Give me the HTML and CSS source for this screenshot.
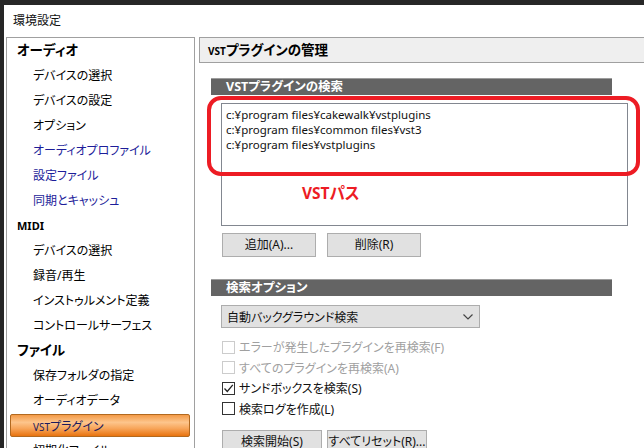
FILE: index.html
```html
<!DOCTYPE html>
<html>
<head>
	<meta charset="UTF-8">
	<title>環境設定</title>
	<link rel="stylesheet" href="styles.css">
</head>
<body>
<div id="topbar"></div>

<div id="window">
	<div id="title">環境設定</div>

	<div id="main">
		<div id="nav">
			<div class="navHead">オーディオ</div>
			<div class="navItem">デバイスの選択</div>
			<div class="navItem">デバイスの設定</div>
			<div class="navItem">オプション</div>
			<div class="navItem blue">オーディオプロファイル</div>
			<div class="navItem blue">設定ファイル</div>
			<div class="navItem blue">同期とキャッシュ</div>
			<div class="navHead small">MIDI</div>
			<div class="navItem">デバイスの選択</div>
			<div class="navItem">録音/再生</div>
			<div class="navItem">インストゥルメント定義</div>
			<div class="navItem">コントロールサーフェス</div>
			<div class="navHead">ファイル</div>
			<div class="navItem">保存フォルダの指定</div>
			<div class="navItem">オーディオデータ</div>
			<div class="navItem selected"><span class="sc">VST</span>プラグイン</div>
			<div class="navItem">初期化ファイル</div>
		</div>

		<div id="page">
			<div id="pageHead"><span class="scHead">VST</span>プラグインの管理</div>

			<div id="content">
				<div class="section">VSTプラグインの検索</div>

				<div id="pathBox">
					<div class="pathLine">c:¥program files¥cakewalk¥vstplugins</div>
					<div class="pathLine">c:¥program files¥common files¥vst3</div>
					<div class="pathLine">c:¥program files¥vstplugins</div>
				</div>

				<div class="btnRow">
					<div class="btn">追加(A)...</div>
					<div class="btn">削除(R)</div>
				</div>

				<div class="section second">検索オプション</div>

				<div id="combo">
					<span>自動バックグラウンド検索</span>
					<svg width="10" height="6" viewBox="0 0 10 6"><polyline points="0.5,0.5 5,5 9.5,0.5" fill="none" stroke="#444" stroke-width="1.2"/></svg>
				</div>

				<div id="checks">
					<div class="check disabled"><span class="box"></span>エラーが発生したプラグインを再検索(F)</div>
					<div class="check disabled"><span class="box"></span>すべてのプラグインを再検索(A)</div>
					<div class="check"><span class="box"><svg width="11" height="11" viewBox="0 0 11 11"><polyline points="1.5,5.5 4.3,8.5 9.8,1.8" fill="none" stroke="#222" stroke-width="1.3"/></svg></span>サンドボックスを検索(S)</div>
					<div class="check"><span class="box"></span>検索ログを作成(L)</div>
				</div>

				<div class="btnRow last">
					<div class="btn wide">検索開始(S)</div>
					<div class="btn wide">すべてリセット(R)...</div>
				</div>

				<div id="ring"></div>
				<div id="ringLabel">VSTパス</div>
			</div>
		</div>
	</div>
</div>
</body>
</html>
```

FILE: styles.css
```css
html, body{
	margin:0;
	padding:0;
}
body{
	width:644px;
	height:448px;
	overflow:hidden;
	background:#262626;
	font-family:"Noto Sans", "Noto Sans CJK JP", sans-serif;
	font-size:12px;
	font-feature-settings:"palt";
	color:#000;
}

#topbar{
	height:5px;
	background:#272727;
}

#window{
	margin-left:4px;
	height:443px;
	background:#fff;
	display:flex;
	flex-direction:column;
}

#title{
	height:32px;
	line-height:32px;
	padding-left:9px;
	font-size:12px;
	color:#111;
}

#main{
	flex:1;
	display:flex;
	gap:4px;
	padding-left:2px;
	min-height:0;
}

/* left tree */
#nav{
	width:187px;
	flex:none;
	border:1px solid #a0a0a0;
	border-bottom:none;
	overflow:hidden;
}
.navHead, .navItem{
	height:25px;
	line-height:25px;
	white-space:nowrap;
}
.navHead{
	padding-left:10px;
	font-weight:bold;
	font-size:13.5px;
}
.navHead.small{
	font-size:11px;
}
.navItem{
	padding-left:26px;
}
.navItem.blue{
	color:#1d1d9a;
}
.navItem.selected{
	margin:1px 4px 1px 3px;
	height:23px;
	line-height:23px;
	padding-left:22px;
	border:1px solid #b2691f;
	border-radius:2px;
	box-sizing:border-box;
	color:#1b1b5e;
	background:linear-gradient(#f39a47, #fdc58c 35%, #f7a458 65%, #e8730f);
}
.sc{
	font-size:10px;
}

/* right page */
#page{
	flex:1;
	min-width:0;
}
#pageHead{
	height:24px;
	line-height:24px;
	border:1px solid #a0a0a0;
	border-right:none;
	background:#efefef;
	padding-left:8px;
	font-weight:bold;
	font-size:13.5px;
}
.scHead{
	font-size:10px;
}

#content{
	position:relative;
	padding:15px 0 0 12px;
}

.section{
	width:401px;
	height:17px;
	line-height:16px;
	border-top:1px solid #9c9c9c;
	background:#646464;
	color:#fff;
	font-weight:bold;
	font-size:12.5px;
	padding-left:15px;
	box-sizing:border-box;
}
.section.second{
	margin-top:22px;
}

#pathBox{
	margin:8px 0 0 10px;
	width:407px;
	height:123px;
	border:1px solid #828790;
	box-sizing:border-box;
	padding:3px 0 0 4px;
	font-size:11.5px;
	color:#111;
}
.pathLine{
	height:15px;
	line-height:15px;
}

.btnRow{
	display:flex;
	gap:11px;
	margin:7px 0 0 11px;
}
.btn{
	width:94px;
	height:24px;
	line-height:22px;
	box-sizing:border-box;
	border:1px solid #adadad;
	background:#e1e1e1;
	text-align:center;
	color:#111;
}
.btn.wide{
	width:100px;
}
.btnRow.last{
	margin-top:11px;
	gap:5px;
}

#combo{
	margin:9px 0 0 10px;
	width:259px;
	height:23px;
	box-sizing:border-box;
	border:1px solid #adadad;
	background:#e1e1e1;
	display:flex;
	align-items:center;
	justify-content:space-between;
	padding:0 6px 0 5px;
	color:#111;
}

#checks{
	margin:9px 0 0 11px;
}
.check{
	height:20.5px;
	display:flex;
	align-items:center;
	gap:4px;
	color:#111;
}
.check.disabled{
	color:#a0a0a0;
}
.box{
	width:13px;
	height:13px;
	box-sizing:border-box;
	border:1px solid #333;
	background:#fff;
	display:flex;
	align-items:center;
	justify-content:center;
}
.check.disabled .box{
	border-color:#cccccc;
}

/* annotation */
#ring{
	position:absolute;
	left:8px;
	top:33px;
	width:433px;
	height:80px;
	box-sizing:border-box;
	border:4px solid #ed1c24;
	border-radius:14px;
}
#ringLabel{
	position:absolute;
	left:103px;
	top:118px;
	color:#ed1c24;
	font-weight:bold;
	font-size:15.5px;
}
```
